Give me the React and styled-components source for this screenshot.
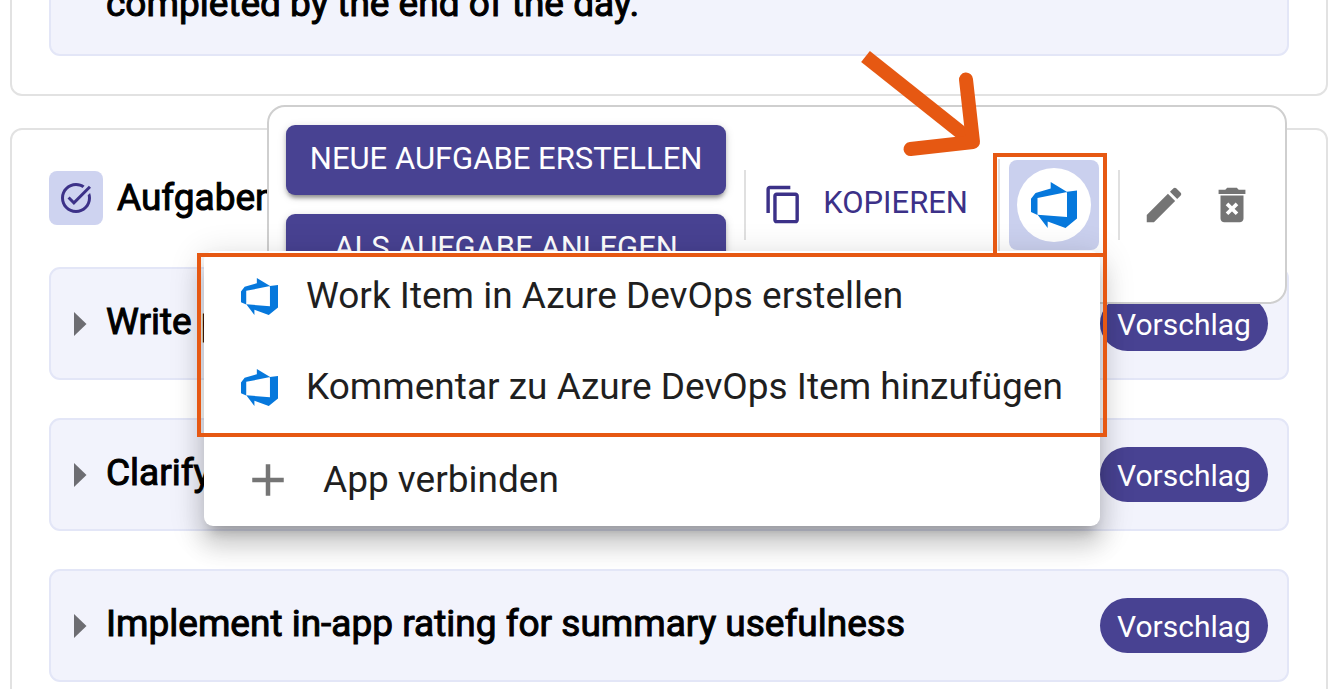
import React from "react";
import styled, { createGlobalStyle } from "styled-components";

const GlobalStyle = createGlobalStyle`
  * { box-sizing: border-box; }
  body {
    margin: 0;
    background: #fff;
    color: #000;
    font-family: Roboto, "Liberation Sans", sans-serif;
  }
  button { font: inherit; color: inherit; background: none; border: 0; padding: 0; margin: 0; cursor: pointer; }
  ul { list-style: none; margin: 0; padding: 0; }
  svg { display: block; flex: none; }
`;

const Page = styled.main`
  height: 100vh;
  overflow: hidden;
  padding: 0 6px 0 10px;
`;

const Card = styled.section`
  position: relative;
  border: 2px solid #e2e2e2;
  border-radius: 12px;
  padding: 41px 37px 38px;
  margin-top: ${(p) => (p.$scrolled ? "-100px" : "32px")};
`;

const CardHeader = styled.header`
  display: flex;
  align-items: center;
  gap: 14px;
  margin-bottom: 42px;
`;

const IconTile = styled.span`
  display: grid;
  place-items: center;
  width: 54px;
  height: 54px;
  border-radius: 8px;
  background: #ced3f0;
  color: #3c3188;
`;

const Title = styled.h2`
  margin: 0;
  font-size: 37px;
  line-height: 52px;
  font-weight: 400;
  -webkit-text-stroke: 1px currentColor;
`;

const TaskList = styled.ul`
  display: flex;
  flex-direction: column;
  gap: 38px;
`;

const Task = styled.li`
  display: flex;
  align-items: center;
  height: 113px;
  padding: 0 19px 0 23px;
  border: 2px solid #e3e6f7;
  border-radius: 11px;
  background: #f2f3fc;
`;

const Toggle = styled.button`
  display: flex;
  align-items: center;
  flex: 1;
  gap: 19px;
  text-align: left;
  font-size: 37px;
  line-height: 52px;
  -webkit-text-stroke: 1px currentColor;

  span { padding-bottom: 3px; }
`;

const Note = styled.p`
  margin: 0;
  padding: 8px 32px 0;
  font-size: 37px;
  line-height: 52px;
  -webkit-text-stroke: 1px currentColor;
`;

const Badge = styled.span`
  width: 168px;
  height: 55px;
  border-radius: 28px;
  background: #484292;
  color: #fff;
  font-size: 30px;
  line-height: 57px;
  text-align: center;
`;

const Toolbar = styled.div`
  position: absolute;
  z-index: 2;
  top: -25px;
  left: 255px;
  right: 39px;
  display: flex;
  align-items: center;
  padding: 18px 30px 18px 17px;
  border: 2px solid #cfcfcf;
  border-radius: 18px;
  background: #fff;
`;

const PrimaryStack = styled.div`
  display: flex;
  flex-direction: column;
  flex: 1;
  gap: 19px;
  margin-right: 18px;
`;

const PrimaryButton = styled.button`
  height: 70px;
  padding-bottom: 3px;
  border-radius: 9px;
  background: #484292;
  color: #fff;
  font-size: 31px;
  line-height: 40px;
  box-shadow: 0 6px 4px -4px rgba(0, 0, 0, 0.25), 0 3px 4px rgba(0, 0, 0, 0.2), 0 2px 10px rgba(0, 0, 0, 0.14);
`;

const Divider = styled.span`
  flex: none;
  width: 2px;
  height: ${(p) => (p.$tall ? "92px" : "70px")};
  background: #e0e0e0;
`;

const CopyButton = styled.button`
  display: flex;
  align-items: center;
  gap: 19px;
  margin: 0 30px 0 17px;
  color: #3c3188;
  font-size: 31px;
  line-height: 40px;

  span { padding-bottom: 4px; }
`;

const AppAnchor = styled.div`
  position: relative;
  margin: 0 19px 0 9px;
`;

const AppButton = styled.button`
  display: grid;
  place-items: center;
  width: 90px;
  height: 90px;
  border-radius: 8px;
  background: #cad0ee;
  color: #0678dc;
`;

const Disc = styled.span`
  display: grid;
  place-items: center;
  width: 74px;
  height: 74px;
  border-radius: 50%;
  background: #fff;
`;

const IconButton = styled.button`
  margin-left: ${(p) => p.$gap}px;
  color: #747474;
`;

const Menu = styled.div`
  position: absolute;
  z-index: 1;
  top: 100%;
  right: -1px;
  margin-top: 1px;
  width: 896px;
  border-radius: 9px;
  background: #fff;
  box-shadow: 0 12px 12px -7px rgba(0, 0, 0, 0.2), 0 19px 24px 2px rgba(0, 0, 0, 0.14), 0 7px 33px 5px rgba(0, 0, 0, 0.12);
`;

const MenuGroup = styled.div`
  position: relative;
  margin-bottom: 2px;
`;

const MenuItem = styled.button`
  display: flex;
  align-items: center;
  gap: 28px;
  width: 100%;
  height: 91px;
  padding-left: 37px;
  color: #1f1f1f;
  font-size: 37px;
  line-height: 52px;
  white-space: nowrap;

  svg { color: ${(p) => (p.$muted ? "#757575" : "#0678dc")}; }
`;

const Frame = styled.div`
  position: absolute;
  z-index: 3;
  inset: ${(p) => p.$inset};
  border: 4px solid #e65812;
  pointer-events: none;
`;

const Arrow = styled.svg`
  position: absolute;
  z-index: 3;
  right: 114px;
  bottom: 100%;
  pointer-events: none;
`;

const MaterialIcon = ({ size, children }) => (
  <svg width={size} height={size} viewBox="0 0 24 24" fill="currentColor" aria-hidden="true">
    {children}
  </svg>
);

const DevOpsLogo = ({ size }) => (
  <svg width={size} height={size} viewBox="1 1 14 14" fill="currentColor" aria-hidden="true">
    <path d="M15 3.622v8.512L11.5 15l-5.425-1.975v1.958L3.004 10.97l8.951.7V4.005L15 3.622zm-2.984.428L6.994 1v2.001L2.382 4.356 1 6.13v4.029l1.978.873V5.868l9.038-1.818z" />
  </svg>
);

const Caret = () => (
  <svg width="13" height="24" viewBox="0 0 13 24" fill="#6d6d72" stroke="none" aria-hidden="true">
    <path d="M0 0 12.500 12 0 24z" />
  </svg>
);

const tasks = ["Write p", "Clarify", "Implement in-app rating for summary usefulness"];

const AppMenu = () => (
  <Menu>
    <MenuGroup>
      <MenuItem>
        <DevOpsLogo size={37} />
        <span>Work Item in Azure DevOps erstellen</span>
      </MenuItem>
      <MenuItem>
        <DevOpsLogo size={37} />
        <span>Kommentar zu Azure DevOps Item hinzufügen</span>
      </MenuItem>
      <Frame $inset="2px -7px -4px -7px" />
    </MenuGroup>
    <MenuItem $muted>
      <MaterialIcon size={54}>
        <path d="M19 13h-6v6h-2v-6H5v-2h6V5h2v6h6v2z" />
      </MaterialIcon>
      <span>App verbinden</span>
    </MenuItem>
  </Menu>
);

const TaskToolbar = () => (
  <Toolbar role="toolbar">
    <PrimaryStack>
      <PrimaryButton>NEUE AUFGABE ERSTELLEN</PrimaryButton>
      <PrimaryButton>ALS AUFGABE ANLEGEN</PrimaryButton>
    </PrimaryStack>
    <Divider />
    <CopyButton>
      <MaterialIcon size={41}>
        <path d="M16 1H4c-1.100 0-2 .9-2 2v14h2V3h12V1zm3 4H8c-1.100 0-2 .9-2 2v14c0 1.100.9 2 2 2h11c1.100 0 2-.9 2-2V7c0-1.100-.9-2-2-2zm0 16H8V7h11v14z" />
      </MaterialIcon>
      <span>KOPIEREN</span>
    </CopyButton>
    <Divider $tall />
    <AppAnchor>
      <AppButton aria-label="Azure DevOps" aria-haspopup="menu">
        <Disc>
          <DevOpsLogo size={46} />
        </Disc>
      </AppButton>
      <AppMenu />
      <Frame $inset="-7px -8px -7px -16px" />
      <Arrow width="130" height="115" viewBox="0 0 130 115" fill="none" stroke="#e65812" strokeWidth="14" aria-hidden="true">
        <path d="M10.500 11.500 118 97" />
        <path d="M111 34.500 118 97 55.500 104" strokeLinecap="round" strokeLinejoin="round" />
      </Arrow>
    </AppAnchor>
    <Divider />
    <IconButton $gap={21} aria-label="Bearbeiten">
      <MaterialIcon size={46}>
        <path d="M3 17.250V21h3.750L17.810 9.940l-3.750-3.750L3 17.250zM20.710 7.040c.39-.39.39-1.020 0-1.410l-2.340-2.340c-.39-.39-1.020-.39-1.410 0l-1.830 1.830 3.750 3.750 1.830-1.830z" />
      </MaterialIcon>
    </IconButton>
    <IconButton $gap={22} aria-label="Löschen">
      <MaterialIcon size={46}>
        <path d="M6 7v12c0 1.100.9 2 2 2h8c1.100 0 2-.9 2-2V7zM15.500 4l-1-1h-5l-1 1H5v2.300h14V4z" />
        <path d="M9.400 11.400l5.200 5.200M14.600 11.400l-5.200 5.200" stroke="#fff" strokeWidth="1.900" />
      </MaterialIcon>
    </IconButton>
  </Toolbar>
);

export default function App() {
  return (
    <>
      <GlobalStyle />
      <Page>
        <Card $scrolled>
          <TaskList>
            <Task>
              <Note>completed by the end of the day.</Note>
            </Task>
          </TaskList>
        </Card>
        <Card>
          <CardHeader>
            <IconTile>
              <MaterialIcon size={36}>
                <path d="M22 5.180L10.590 16.600l-4.240-4.240 1.410-1.410 2.830 2.830 10-10L22 5.180zm-2.210 5.040c.13.570.21 1.170.21 1.780 0 4.420-3.580 8-8 8s-8-3.580-8-8 3.580-8 8-8c1.580 0 3.040.46 4.280 1.250l1.440-1.440C16.100 2.670 14.130 2 12 2 6.480 2 2 6.480 2 12s4.480 10 10 10 10-4.480 10-10c0-1.190-.22-2.330-.6-3.390l-1.610 1.610z" />
              </MaterialIcon>
            </IconTile>
            <Title>Aufgaben</Title>
          </CardHeader>
          <TaskList>
            {tasks.map((name) => (
              <Task key={name}>
                <Toggle aria-expanded="false">
                  <Caret />
                  <span>{name}</span>
                </Toggle>
                <Badge>Vorschlag</Badge>
              </Task>
            ))}
          </TaskList>
          <TaskToolbar />
        </Card>
      </Page>
    </>
  );
}
